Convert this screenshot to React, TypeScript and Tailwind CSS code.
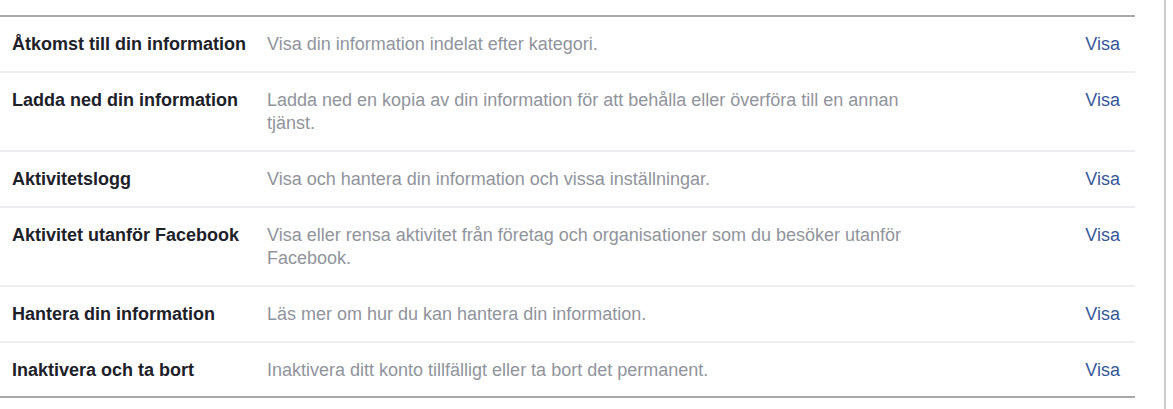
import React from 'react';

const rows = [
  { title: 'Åtkomst till din information', desc: 'Visa din information indelat efter kategori.' },
  { title: 'Ladda ned din information', desc: 'Ladda ned en kopia av din information för att behålla eller överföra till en annan tjänst.' },
  { title: 'Aktivitetslogg', desc: 'Visa och hantera din information och vissa inställningar.' },
  { title: 'Aktivitet utanför Facebook', desc: 'Visa eller rensa aktivitet från företag och organisationer som du besöker utanför Facebook.' },
  { title: 'Hantera din information', desc: 'Läs mer om hur du kan hantera din information.' },
  { title: 'Inaktivera och ta bort', desc: 'Inaktivera ditt konto tillfälligt eller ta bort det permanent.' },
];

const App = () => {
  return (
    <div className="flex h-[409px] w-[1173px] bg-white font-['Liberation_Sans',Arial,sans-serif]">
      <div className="w-[1135px] pt-[15px]">
        <div className="border-y-2 border-[#a9a9a9]">
          {rows.map((row, i) => (
            <div
              key={row.title}
              className={`flex pt-4 pl-3 pr-[15px] leading-[23px] ${i > 0 ? 'border-t-2 border-[#ebedf0]' : ''} ${
                i === rows.length - 1 ? 'pb-[14px]' : 'pb-[15px]'
              }`}
            >
              <div className="w-[255px] shrink-0 text-[18px] font-bold text-[#1d2129]">{row.title}</div>
              <div className="w-[660px] text-[18px] text-[#90949c]">{row.desc}</div>
              <div className="ml-auto text-[18px] text-[#365899]">Visa</div>
            </div>
          ))}
        </div>
      </div>
      <div className="ml-[29px] w-[2px] bg-[#cccccc]" />
    </div>
  );
};

export default App;
